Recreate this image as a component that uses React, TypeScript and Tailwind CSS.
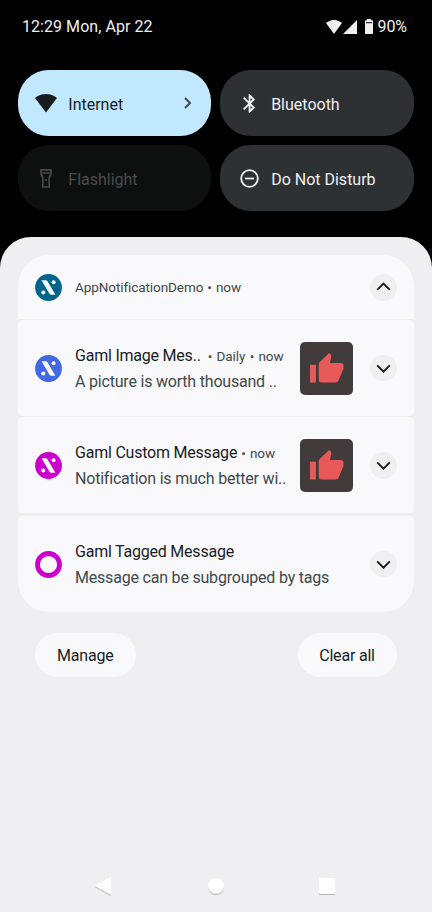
import type { ReactNode } from 'react';

const WIFI = 'M12 21.5L23.64 7c-.45-.34-4.93-4-11.64-4S.81 6.66.36 7z';

function Wifi({ className }: { className: string }) {
  return (
    <svg viewBox="0.36 3 23.28 18.5" preserveAspectRatio="none" className={className} fill="currentColor">
      <path d={WIFI} />
    </svg>
  );
}

function StatusBar() {
  return (
    <header className="flex h-[54px] items-center pl-[22px] text-[16px] text-[#efeff2]">
      <span className="w-[303.5px] whitespace-nowrap tracking-[0.05px]">12:29 Mon, Apr 22</span>
      <Wifi className="mb-px h-[14px] w-[16px] shrink-0" />
      <svg viewBox="0 0 14 14" className="mb-px ml-[1.5px] h-[14px] w-[14px] shrink-0" fill="currentColor">
        <path d="M14 0v14H0z" />
      </svg>
      <svg viewBox="0 0 8 15" className="mb-px ml-[7.5px] h-[15px] w-[8px] shrink-0" fill="currentColor">
        <path d="M2 0h4v1.3h1.2q.8 0 .8.8v12q0 .9-.8.9H.8q-.8 0-.8-.9v-12q0-.8.8-.8H2z" />
        <path d="M1 3.2h6v1H1z" fill="#000" />
      </svg>
      <span className="ml-[5px] whitespace-nowrap tracking-[-0.1px]">90%</span>
    </header>
  );
}

function Tile({ icon, label, className, arrow }: { icon: ReactNode; label: string; className: string; arrow?: boolean }) {
  return (
    <div className={`flex h-[66px] items-center rounded-[31px] pr-[18px] pl-[17.7px] text-[16px] ${className}`}>
      <span className="mr-[11px] flex w-[22px] justify-center">{icon}</span>
      <span className="flex-1 whitespace-nowrap pt-[3px]">{label}</span>
      {arrow && (
        <svg viewBox="0 0 10 12" className="h-[12px] w-[10px]" fill="none" stroke="#40484d" strokeWidth="1.9">
          <path d="M2 1l5 5-5 5" />
        </svg>
      )}
    </div>
  );
}

function Logo({ className }: { className: string }) {
  return (
    <svg viewBox="0 0 27 27" className={`size-[27px] shrink-0 ${className}`}>
      <circle cx="13.5" cy="13.5" r="13.4" fill="currentColor" />
      <path d="M6.5 6.3h4.4q1 0 1.6 1l7.9 13.4h-4.2q-1.1 0-1.7-1z" fill="#f9f9fc" />
      <circle cx="18.6" cy="8.3" r="2" fill="#f9f9fc" />
      <circle cx="8.3" cy="18.6" r="2" fill="#f9f9fc" />
    </svg>
  );
}

function Ring() {
  return (
    <svg viewBox="0 0 27 27" className="size-[27px] shrink-0">
      <circle cx="13.5" cy="13.5" r="11" fill="none" stroke="#cc00cc" strokeWidth="4.8" />
    </svg>
  );
}

function Expand({ up }: { up?: boolean }) {
  return (
    <span className="mr-[17.5px] flex size-[26.5px] shrink-0 items-center justify-center rounded-full bg-[#f0f0f3]">
      <svg viewBox="0 0 16 10" className="h-[10px] w-[16px]" fill="none" stroke="#191c1e" strokeWidth="1.9">
        <path d={up ? 'M2.200 7.800L8.500 1.500l6.300 6.300' : 'M2.200 2.400L8.500 8.700l6.300-6.300'} />
      </svg>
    </span>
  );
}

function Thumb() {
  return (
    <span className="mr-[17px] flex size-[53px] shrink-0 items-center justify-center rounded-[5px] bg-[#413c3b]">
      <svg viewBox="0.500 0 34 30" className="h-[30px] w-[34px]" fill="#e85a5a">
        <path d="M0.500 11.8h5.900V29.500H0.500zM9.200 11.300q0-1.200.8-2L19.700 0l1.600 1.500q.8.900.5 2L20.400 10h11q2.600 0 2.600 2.800v2.600q0 .6-.3 1.200l-4.600 11q-.8 1.900-2.700 1.900H12q-2.800 0-2.800-2.900z" />
      </svg>
    </span>
  );
}

type Note = { icon: ReactNode; title: string; meta: string; body: string; thumb?: boolean; shape: string; gap: string };

const notes: Note[] = [
  { icon: <Logo className="text-[#4169e1]" />, title: 'Gaml Image Mes..', meta: '• Daily • now', body: 'A picture is worth thousand ..', thumb: true, shape: 'mt-px h-[96.5px] rounded-[4px]', gap: 'ml-[7px]' },
  { icon: <Logo className="text-[#cc00cc]" />, title: 'Gaml Custom Message', meta: '• now', body: 'Notification is much better wi..', thumb: true, shape: 'mt-[0.7px] h-[96.3px] rounded-[4px]', gap: 'ml-[4px]' },
  { icon: <Ring />, title: 'Gaml Tagged Message', meta: '', body: 'Message can be subgrouped by tags', shape: 'mt-[2.5px] h-[96.5px] rounded-t-[4px] rounded-b-[31px]', gap: '' },
];

function NoteRow({ icon, title, meta, body, thumb, shape, gap }: Note) {
  return (
    <article className={`flex items-center bg-[#f9f9fc] pl-[17.5px] ${shape}`}>
      {icon}
      <div className="ml-[13px] min-w-0 flex-1 whitespace-nowrap pt-px">
        <div className="flex h-[26px] items-baseline leading-[26px]">
          <span className="text-[16px] tracking-[-0.22px] text-[#191c1e]">{title}</span>
          <span className={`text-[13.5px] tracking-[-0.05px] [word-spacing:1px] text-[#40484d] ${gap}`}>{meta}</span>
        </div>
        <div className="h-[26px] text-[16px] leading-[26px] tracking-[-0.2px] text-[#40484d]">{body}</div>
      </div>
      {thumb && <Thumb />}
      <Expand />
    </article>
  );
}

export default function App() {
  return (
    <main className="flex h-[912px] w-[432px] flex-col overflow-hidden bg-black font-[Roboto,sans-serif]">
      <StatusBar />
      <section className="mr-[17.7px] ml-[17.6px] mt-[16.3px] grid grid-cols-2 gap-x-[9px] gap-y-[9px]">
        <Tile className="bg-[#c2e8ff] text-[#191c1e]" label="Internet" arrow icon={<Wifi className="h-[18.500px] w-[22px]" />} />
        <Tile
          className="bg-[#2e3134] text-[#efeff2]"
          label="Bluetooth"
          icon={
            <svg viewBox="5 2 13 20" className="h-[19px] w-[12.300px]" fill="currentColor">
              <path d="M17.71 7.71L12 2h-1v7.590L6.410 5 5 6.410 10.590 12 5 17.590 6.410 19 11 14.410V22h1l5.710-5.710-4.300-4.290zM13 5.830l1.880 1.880L13 9.590zm1.880 10.460L13 18.170v-3.760z" />
            </svg>
          }
        />
        <Tile
          className="bg-[#0e100f] text-[#494b4b]"
          label="Flashlight"
          icon={
            <svg viewBox="0 0 12 19" className="h-[19px] w-[12px]" fill="none" stroke="currentColor" strokeWidth="1.6">
              <path d="M1 .9h10v4.600L9.200 8v10H2.800V8L1 5.500zM1 4h10" />
              <circle cx="6" cy="11" r="1.100" fill="currentColor" stroke="none" />
            </svg>
          }
        />
        <Tile
          className="bg-[#2e3134] text-[#efeff2]"
          label="Do Not Disturb"
          icon={
            <svg viewBox="0 0 19 19" className="size-[19px]" fill="none" stroke="currentColor" strokeWidth="1.800">
              <circle cx="9.500" cy="9.500" r="8.300" />
              <path d="M5 9.500h9" />
            </svg>
          }
        />
      </section>
      <section className="mt-[26.2px] flex flex-1 flex-col rounded-t-[31px] bg-[#efeff1] pr-[18px] pl-[17.5px] pt-[17.5px]">
        <div className="flex h-[64px] items-center rounded-t-[31px] rounded-b-[2px] bg-[#f9f9fc] pt-px pl-[17.5px]">
          <Logo className="text-[#00658b]" />
          <span className="ml-[13px] flex-1 whitespace-nowrap text-[13.5px] tracking-[-0.08px] [word-spacing:0.8px] text-[#40484d]">AppNotificationDemo • now</span>
          <Expand up />
        </div>
        {notes.map((n) => (
          <NoteRow key={n.title} {...n} />
        ))}
        <div className="mt-[20.5px] flex justify-between px-[17.5px] text-[16px] tracking-[-0.2px] text-[#191c1e]">
          <button className="h-[44px] w-[100.5px] rounded-full bg-[#f9f9fc] pt-[2px]">Manage</button>
          <button className="h-[44px] w-[99px] rounded-full bg-[#f9f9fc] pt-[2px]">Clear all</button>
        </div>
        <nav className="mt-auto mb-[17px] flex h-[19px] items-center pl-[77.5px] text-white drop-shadow-[0_1px_0.5px_rgba(0,0,0,0.25)]">
          <svg viewBox="0 0 16 18" className="h-[18px] w-[16px]" fill="currentColor"><path d="M15 .3q1-.5 1 .5v16.400q0 1-1 .5L.6 9.500q-.8-.5 0-1z" /></svg>
          <span className="ml-[97px] size-[16px] rounded-full bg-white" />
          <span className="ml-[95px] size-[16px] rounded-[1px] bg-white" />
        </nav>
      </section>
    </main>
  );
}
